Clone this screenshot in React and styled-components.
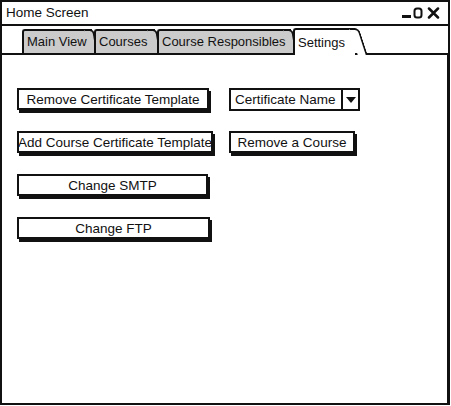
import React from "react";
import styled, { createGlobalStyle } from "styled-components";

const Global = createGlobalStyle`
  html, body { margin: 0; padding: 0; background: #fff; }
  body { font-family: "Liberation Sans", Arial, sans-serif; }
  * { box-sizing: border-box; }
`;

const Window = styled.div`
  width: 450px;
  height: 405px;
  border: 2px solid #111;
  display: flex;
  flex-direction: column;
  background: #fff;
  color: #111;
  font-size: 13.5px;
`;

const TitleBar = styled.div`
  height: 24px;
  border-bottom: 2px solid #111;
  display: flex;
  align-items: center;
  justify-content: space-between;
  padding: 0 6px 0 4px;
`;

const Title = styled.span`
  font-size: 13.5px;
  line-height: 1;
  margin-top: -1px;
`;

const TabStrip = styled.div`
  height: 27px;
  display: flex;
  align-items: flex-end;
  padding-left: 20px;
  position: relative;
  z-index: 1;
`;

const Tab = styled.div`
  position: relative;
  width: ${(p) => p.$w}px;
  height: ${(p) => (p.$active ? 27 : 24)}px;
  margin-bottom: ${(p) => (p.$active ? -2 : 0)}px;
  margin-right: ${(p) => (p.$active ? 0 : 2)}px;
  padding: ${(p) => (p.$active ? "5px 0 0 3px" : "3px 0 0 3px")};
  background: ${(p) => (p.$active ? "#fff" : "#cbcbcb")};
  border-left: 2px solid #111;
  border-top: 2px solid #111;
  border-top-left-radius: 3px;
  font-size: 13px;
  white-space: nowrap;
  z-index: ${(p) => (p.$active ? 2 : 1)};
  &::after {
    content: "";
    position: absolute;
    top: -2px;
    bottom: 0;
    right: ${(p) => (p.$active ? -4 : -2)}px;
    width: 8px;
    background: inherit;
    border-top: 2px solid #111;
    border-right: 2px solid #111;
    border-top-right-radius: 5px;
    transform: skewX(${(p) => (p.$active ? 18 : 10)}deg);
    transform-origin: top left;
    z-index: -1;
  }
`;

const TabLabel = styled.span`
  position: relative;
  z-index: 1;
`;

const Panel = styled.div`
  flex: 1;
  border-top: 2px solid #111;
  border-right: 1px solid #111;
  padding: 33px 0 0 15px;
  display: grid;
  grid-template-columns: 212px auto;
  grid-auto-rows: 23px;
  row-gap: 20px;
  align-content: start;
  justify-items: start;
`;

const Button = styled.div`
  width: ${(p) => p.$w}px;
  height: 22px;
  border: 2px solid #111;
  box-shadow: 2px 3px 0 #111;
  background: #fff;
  display: flex;
  align-items: center;
  justify-content: center;
  font-size: 13.5px;
  white-space: nowrap;
`;

const Dropdown = styled.div`
  width: 131px;
  height: 23px;
  border: 2px solid #111;
  display: flex;
  align-items: stretch;
  font-size: 13.5px;
`;

const DropText = styled.div`
  flex: 1;
  display: flex;
  align-items: center;
  padding-left: 4px;
  white-space: nowrap;
`;

const DropArrow = styled.div`
  width: 17px;
  border-left: 2px solid #111;
  display: flex;
  align-items: center;
  justify-content: center;
`;

const Controls = styled.svg`
  display: block;
`;

export default function App() {
  return (
    <>
      <Global />
      <Window>
        <TitleBar>
          <Title>Home Screen</Title>
          <Controls width="40" height="12" viewBox="0 0 40 12">
            <rect x="0" y="8" width="9" height="3" fill="#111" />
            <rect x="12.5" y="1.5" width="7" height="9" rx="2.5" fill="none" stroke="#111" strokeWidth="2" />
            <path d="M27 1.5 L36 10.5 M36 1.5 L27 10.5" stroke="#111" strokeWidth="2.5" strokeLinecap="round" />
          </Controls>
        </TitleBar>
        <TabStrip>
          <Tab $w={70}><TabLabel>Main View</TabLabel></Tab>
          <Tab $w={61}><TabLabel>Courses</TabLabel></Tab>
          <Tab $w={134}><TabLabel>Course Responsibles</TabLabel></Tab>
          <Tab $active $w={62}><TabLabel>Settings</TabLabel></Tab>
        </TabStrip>
        <Panel>
          <Button $w={192}>Remove Certificate Template</Button>
          <Dropdown>
            <DropText>Certificate Name</DropText>
            <DropArrow>
              <svg width="10" height="6" viewBox="0 0 10 6">
                <path d="M0 0 H10 L5 6 Z" fill="#111" />
              </svg>
            </DropArrow>
          </Dropdown>
          <Button $w={196}>Add Course Certificate Template</Button>
          <Button $w={126}>Remove a Course</Button>
          <Button $w={191}>Change SMTP</Button>
          <div />
          <Button $w={193}>Change FTP</Button>
        </Panel>
      </Window>
    </>
  );
}
